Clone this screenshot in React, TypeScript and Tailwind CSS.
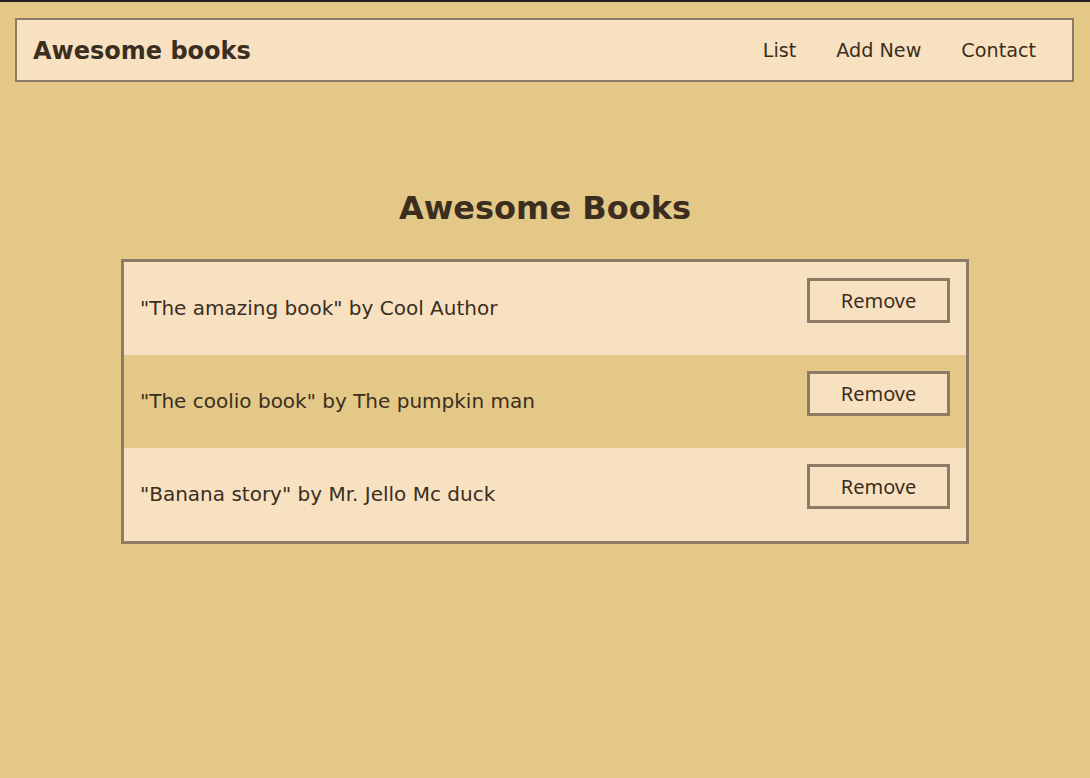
const books = [
  { title: 'The amazing book', author: 'Cool Author' },
  { title: 'The coolio book', author: 'The pumpkin man' },
  { title: 'Banana story', author: 'Mr. Jello Mc duck' },
];

function Header() {
  return (
    <header className="mt-4 ml-[15px] w-[1059px] h-16 border-2 border-[#8d7b68] bg-[#f7e1c1] flex items-center justify-between pl-4 pr-4">
      <h2 className="text-[24px] leading-[30px] pt-px font-bold">Awesome books</h2>
      <nav className="flex pt-[2px] text-[19.2px]">
        <a className="px-5">List</a>
        <a className="px-5">Add New</a>
        <a className="px-5">Contact</a>
      </nav>
    </header>
  );
}

export default function App() {
  return (
    <div className="min-h-screen bg-[#e4c888] border-t-2 border-[#222] text-[#3b2e1e] font-['DejaVu_Sans',sans-serif]">
      <Header />
      <h1 className="mt-[108px] text-[32px] leading-[37px] font-bold text-center">Awesome Books</h1>
      <ul className="mt-[32px] w-[848px] mx-auto border-[3px] border-[#8d7b68]">
        {books.map((b, i) => (
          <li
            key={b.title}
            className={`h-[93px] p-4 flex items-center justify-between ${i % 2 === 1 ? 'bg-[#e4c888]' : 'bg-[#f7e1c1]'}`}
          >
            <p className="pb-[2px] text-[20px]">
              "{b.title}" by {b.author}
            </p>
            <button className="self-start w-[143px] h-[45px] border-[3px] border-[#8d7b68] bg-[#f7e1c1] text-[20px] font-['Noto_Sans',sans-serif]">
              Remove
            </button>
          </li>
        ))}
      </ul>
    </div>
  );
}
